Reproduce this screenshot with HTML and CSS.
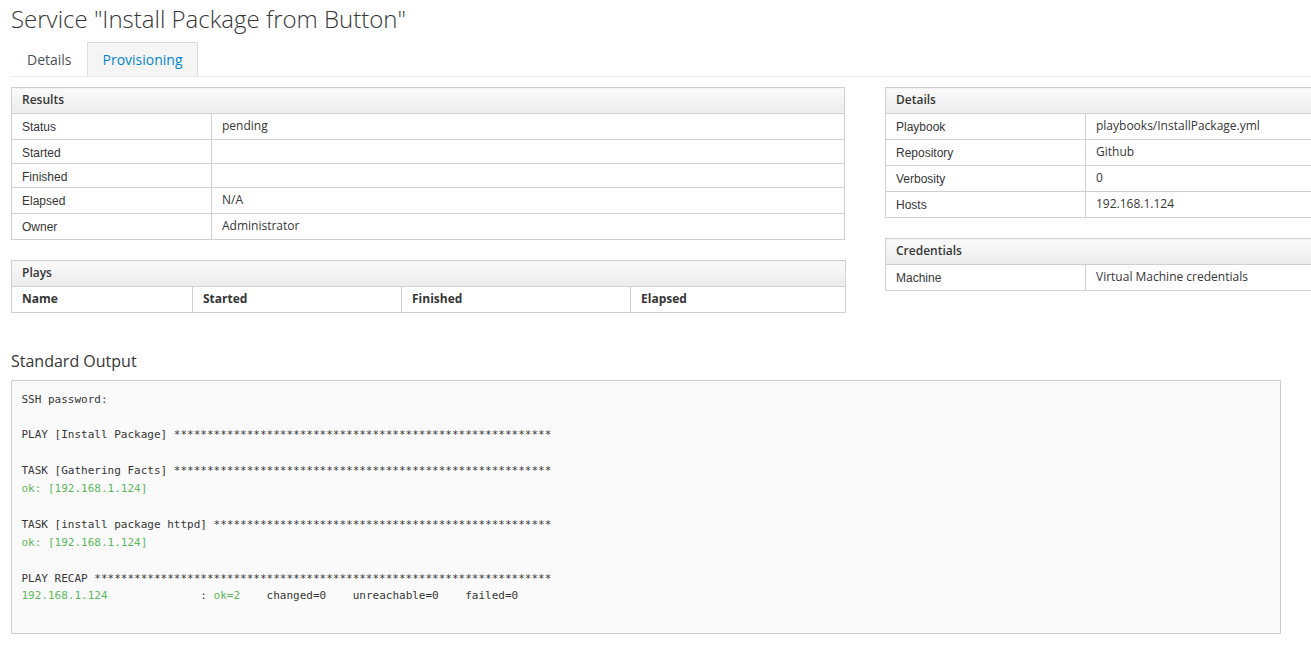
FILE: index.html
```html
<!DOCTYPE html>
<html>
<head>
<meta charset="utf-8">
<link rel="stylesheet" href="styles.css">
</head>
<body>
<div class="page">
  <h1 class="title">Service "Install Package from Button"</h1>
  <ul class="tabs">
    <li class="tab">Details</li>
    <li class="tab active">Provisioning</li>
  </ul>
  <div class="columns">
    <div class="col">
      <table class="kv">
        <colgroup><col class="w-label"><col></colgroup>
        <thead><tr><th colspan="2">Results</th></tr></thead>
        <tbody>
          <tr><td class="label">Status</td><td class="value">pending</td></tr>
          <tr><td class="label">Started</td><td class="value"></td></tr>
          <tr><td class="label">Finished</td><td class="value"></td></tr>
          <tr><td class="label">Elapsed</td><td class="value">N/A</td></tr>
          <tr><td class="label">Owner</td><td class="value">Administrator</td></tr>
        </tbody>
      </table>
      <table class="plays">
        <colgroup>
          <col class="c-name"><col class="c-started"><col class="c-finished"><col class="c-elapsed">
        </colgroup>
        <thead>
          <tr><th colspan="4" class="caption">Plays</th></tr>
          <tr class="colhead">
            <th>Name</th>
            <th>Started</th>
            <th>Finished</th>
            <th>Elapsed</th>
          </tr>
        </thead>
      </table>
    </div>
    <div class="col">
      <table class="kv">
        <colgroup><col class="w-label"><col></colgroup>
        <thead><tr><th colspan="2">Details</th></tr></thead>
        <tbody>
          <tr><td class="label">Playbook</td><td class="value">playbooks/InstallPackage.yml</td></tr>
          <tr><td class="label">Repository</td><td class="value">Github</td></tr>
          <tr><td class="label">Verbosity</td><td class="value">0</td></tr>
          <tr><td class="label">Hosts</td><td class="value">192.168.1.124</td></tr>
        </tbody>
      </table>
      <table class="kv">
        <colgroup><col class="w-label"><col></colgroup>
        <thead><tr><th colspan="2">Credentials</th></tr></thead>
        <tbody>
          <tr><td class="label">Machine</td><td class="value">Virtual Machine credentials</td></tr>
        </tbody>
      </table>
    </div>
  </div>
  <h3 class="section">Standard Output</h3>
<pre class="output">SSH password:

PLAY [Install Package] *********************************************************

TASK [Gathering Facts] *********************************************************
<span class="ok">ok: [192.168.1.124]</span>

TASK [install package httpd] ***************************************************
<span class="ok">ok: [192.168.1.124]</span>

PLAY RECAP *********************************************************************
<span class="ok">192.168.1.124</span>              : <span class="ok">ok=2</span>    changed=0    unreachable=0    failed=0

</pre>
</div>
</body>
</html>
```
FILE: styles.css
```css
html, body {
  margin: 0;
  padding: 0;
  background: #fff;
  overflow: hidden;
}
body {
  font-family: "Open Sans", "Liberation Sans", sans-serif;
  font-size: 12px;
  color: #363636;
}
.page {
  padding: 0 0 0 11px;
  width: 1710px;
}
.title {
  margin: 0;
  padding-top: 2px;
  font-size: 24px;
  font-weight: 300;
  line-height: 33px;
  color: #363636;
}
.tabs {
  list-style: none;
  margin: 7px 0 0 0;
  padding: 0;
  display: flex;
  width: 1300px;
  border-bottom: 1px solid #ededed;
}
.tab {
  font-size: 14px;
  line-height: 20px;
  padding: 7px 14px 6px 15px;
  border: 1px solid transparent;
  border-bottom: none;
  color: #4d5258;
}
.tab.active {
  background: #f5f5f5;
  border-color: #dcdcdc;
  color: #0088ce;
}
.columns {
  display: flex;
  gap: 40px;
  margin-top: 10px;
}
.col {
  width: 834px;
  display: flex;
  flex-direction: column;
  gap: 20px;
}
table {
  border-collapse: collapse;
  width: 834px;
  table-layout: fixed;
}
.w-label { width: 200px; }
.c-name { width: 181px; }
.c-started { width: 209px; }
.c-finished { width: 229px; }
.c-elapsed { width: 215px; }
th, td {
  border: 1px solid #d1d1d1;
  text-align: left;
  vertical-align: top;
  padding: 0 10px;
  line-height: 16px;
}
.kv thead th, .plays .caption {
  background: linear-gradient(#fafafa, #ececec);
  font-weight: 600;
  height: 26px;
  padding-top: 4px;
  box-sizing: border-box;
}
.kv td {
  box-sizing: border-box;
}
.kv td.label {
  height: 24px;
  font-family: "Liberation Sans", Arial, sans-serif;
  padding-top: 5px;
}
.kv td.value {
  padding-top: 4px;
}
.kv td.value:not(:empty) {
  height: 26px;
}
.plays .colhead th {
  font-weight: 700;
  height: 26px;
  box-sizing: border-box;
  padding-top: 4px;
  background: #fff;
}
.section {
  margin: 37px 0 0 0;
  font-size: 16px;
  font-weight: 400;
  line-height: 22px;
}
.output {
  margin: 8px 0 0 0;
  width: 1270px;
  box-sizing: border-box;
  padding: 9.5px;
  background: #fafafa;
  border: 1px solid #cccccc;
  border-radius: 1px;
  font-family: "DejaVu Sans Mono", monospace;
  font-size: 11px;
  line-height: 17.9px;
  color: #363636;
}
.ok {
  color: #5cb85c;
}
```
